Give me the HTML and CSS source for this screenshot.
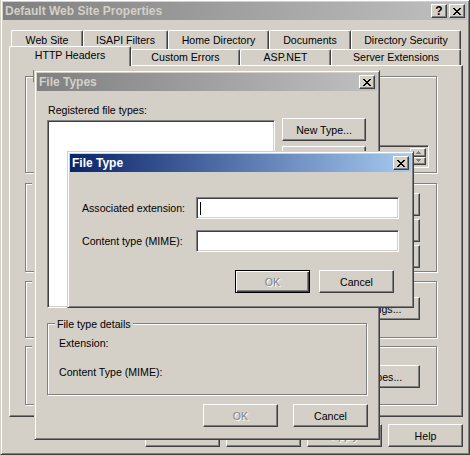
FILE: index.html
```html
<!DOCTYPE html>
<html>
<head>
<meta charset="utf-8">
<link rel="stylesheet" href="styles.css">
</head>
<body>
<div class="win outer">
  <div class="title inactive">
    <span class="t">Default Web Site Properties</span>
    <span class="capbtn help">?</span>
    <span class="capbtn close"><svg width="8" height="7" viewBox="0 0 8 7" shape-rendering="crispEdges"><path d="M0 0h2v1H0zM6 0h2v1H6zM1 1h2v1H1zM5 1h2v1H5zM2 2h4v1H2zM3 3h2v1H3zM2 4h4v1H2zM1 5h2v1H1zM5 5h2v1H5zM0 6h2v1H0zM6 6h2v1H6z"/></svg></span>
  </div>
  <div class="tabs">
    <div class="tabrow r1">
      <span class="tab w72">Web Site</span>
      <span class="tab w85">ISAPI Filters</span>
      <span class="tab w101">Home Directory</span>
      <span class="tab w82">Documents</span>
      <span class="tab w110">Directory Security</span>
    </div>
    <div class="tabrow r2">
      <span class="tab sel w122">HTTP Headers</span>
      <span class="tab w109">Custom Errors</span>
      <span class="tab w91">ASP.NET</span>
      <span class="tab w130">Server Extensions</span>
    </div>
  </div>
  <div class="panel">
    <div class="grp g1">
      <span class="glabel chk"><span class="cbox"></span></span>
      <div class="dtp"><span class="dtf"></span><span class="spin"><span class="sbtn"><svg width="5" height="3" viewBox="0 0 5 3"><path d="M2 0h1v1h1v1h1v1H0V2h1V1h1z" fill="#808080"/></svg></span><span class="sbtn"><svg width="5" height="3" viewBox="0 0 5 3"><path d="M0 0h5v1H4v1H3v1H2V2H1V1H0z" fill="#808080"/></svg></span></span></div>
    </div>
    <div class="grp g2">
      <span class="glabel"></span>
      <div class="gbtns">
        <span class="btn">Add...</span>
        <span class="btn">Edit...</span>
        <span class="btn">Remove</span>
      </div>
    </div>
    <div class="grp g3">
      <span class="glabel"></span>
      <span class="btn wide">Edit Ratings...</span>
    </div>
    <div class="grp g4">
      <span class="glabel"></span>
      <span class="btn wide">MIME Types...</span>
    </div>
  </div>
  <div class="btnrow">
    <span class="btn">OK</span>
    <span class="btn">Cancel</span>
    <span class="btn dis">Apply</span>
    <span class="btn">Help</span>
  </div>
</div>

<div class="win ftypes">
  <div class="title inactive">
    <span class="t">File Types</span>
    <span class="capbtn close"><svg width="8" height="7" viewBox="0 0 8 7" shape-rendering="crispEdges"><path d="M0 0h2v1H0zM6 0h2v1H6zM1 1h2v1H1zM5 1h2v1H5zM2 2h4v1H2zM3 3h2v1H3zM2 4h4v1H2zM1 5h2v1H1zM5 5h2v1H5zM0 6h2v1H0zM6 6h2v1H6z"/></svg></span>
  </div>
  <div class="ftbody">
    <span class="lbl reg">Registered file types:</span>
    <div class="ftrow">
      <div class="list"></div>
      <div class="ftbtns">
        <span class="btn nt">New Type...</span>
        <span class="btn nt"></span>
        <span class="btn nt"></span>
      </div>
    </div>
    <div class="grp details">
      <span class="glabel txt">File type details</span>
      <span class="lbl">Extension:</span>
      <span class="lbl">Content Type (MIME):</span>
    </div>
    <div class="ftok">
      <span class="btn dis">OK</span>
      <span class="btn">Cancel</span>
    </div>
  </div>
</div>

<div class="win ftype">
  <div class="title active">
    <span class="t">File Type</span>
    <span class="capbtn close"><svg width="8" height="7" viewBox="0 0 8 7" shape-rendering="crispEdges"><path d="M0 0h2v1H0zM6 0h2v1H6zM1 1h2v1H1zM5 1h2v1H5zM2 2h4v1H2zM3 3h2v1H3zM2 4h4v1H2zM1 5h2v1H1zM5 5h2v1H5zM0 6h2v1H0zM6 6h2v1H6z"/></svg></span>
  </div>
  <div class="fbody">
    <div class="frow">
      <span class="lbl">Associated extension:</span>
      <span class="edit"><span class="caret"></span></span>
    </div>
    <div class="frow second">
      <span class="lbl">Content type (MIME):</span>
      <span class="edit"></span>
    </div>
    <div class="fbtns">
      <span class="btn dis def">OK</span>
      <span class="btn">Cancel</span>
    </div>
  </div>
</div>
</body>
</html>
```

FILE: styles.css
```css
* { box-sizing: border-box; margin: 0; padding: 0; }
html, body { width: 470px; height: 456px; overflow: hidden; }
body {
  background: #d4d0c8;
  font-family: "Liberation Sans", Arial, sans-serif;
  font-size: 10.6px;
  color: #000;
  position: relative;
}

/* windows */
.win {
  position: absolute;
  background: #d4d0c8;
  border: 1px solid;
  border-color: #d4d0c8 #404040 #404040 #d4d0c8;
  box-shadow: inset 1px 1px #fff, inset -1px -1px #808080;
  padding: 2px;
  display: flex;
  flex-direction: column;
}
.outer { left: 0; top: -1px; width: 470px; height: 456px; }
.ftypes { left: 34px; top: 70px; width: 346px; height: 370px; }
.ftype { left: 67px; top: 151px; width: 347px; height: 157px; }

.title {
  height: 18px;
  flex: none;
  display: flex;
  align-items: center;
  padding: 0 2px 0 2px;
  font-weight: bold;
  font-size: 12px;
}
.title .t { flex: 1; white-space: nowrap; }
.title.inactive { background: linear-gradient(to right, #808080, #c0c0c0); color: #d4d0c8; }
.title.active { background: linear-gradient(to right, #0a246a, #a6caf0); color: #fff; }

.capbtn {
  width: 16px;
  height: 14px;
  background: #d4d0c8;
  border: 1px solid;
  border-color: #fff #404040 #404040 #fff;
  box-shadow: inset -1px -1px #808080;
  display: flex;
  align-items: center;
  justify-content: center;
  color: #000;
  font-size: 12px;
  font-weight: bold;
  line-height: 1;
}
.capbtn.help { margin-right: 2px; }
.capbtn svg { display: block; }

/* tabs */
.tabs { margin-top: 10px; display: flex; flex-direction: column; }
.tabrow { display: flex; }
.r1 { height: 19px; margin-left: 8px; }
.r2 { height: 16px; margin-left: 6px; align-items: flex-end; position: relative; z-index: 2; }
.tab {
  display: flex;
  align-items: center;
  justify-content: center;
  white-space: nowrap;
  border-top: 1px solid #fff;
  border-left: 1px solid #fff;
  border-right: 1px solid #404040;
  box-shadow: inset -1px 0 #808080;
  border-radius: 2px 2px 0 0;
  background: #d4d0c8;
  padding-bottom: 1px;
}
.r1 .tab { height: 19px; }
.r2 .tab { height: 16px; }
.r2 .tab.sel { height: 20px; margin-bottom: -1px; padding-bottom: 3px; position: relative; }
.w72 { width: 72px; } .w85 { width: 85px; } .w101 { width: 101px; } .w82 { width: 82px; }
.w110 { width: 110px; } .w122 { width: 122px; } .w109 { width: 109px; } .w91 { width: 91px; } .w130 { width: 130px; }

.panel {
  margin-left: 6px;
  width: 454px;
  height: 352px;
  border: 1px solid;
  border-color: #fff #404040 #404040 #fff;
  box-shadow: inset -1px -1px #808080;
  padding: 10px 0 0 15px;
  display: flex;
  flex-direction: column;
}

/* group boxes */
.grp {
  position: relative;
  border: 1px solid #808080;
  box-shadow: inset 1px 1px #fff, 1px 1px #fff;
}
.panel .grp { width: 412px; flex: none; }
.glabel {
  position: absolute;
  top: -7px;
  left: 6px;
  width: 70px;
  background: #d4d0c8;
  padding: 0 2px;
  white-space: nowrap;
  display: flex;
  align-items: center;
  height: 13px;
}
.glabel.txt { width: auto; }
.glabel.chk { left: 7px; top: -7px; padding: 0 3px 0 0; width: 140px; }
.cbox {
  width: 13px; height: 13px; margin-right: 4px; background: #fff;
  border: 1px solid; border-color: #808080 #fff #fff #808080;
  box-shadow: inset 1px 1px #404040, inset -1px -1px #d4d0c8;
}
.g1 { height: 97px; display: flex; flex-direction: column; align-items: flex-end; padding: 68px 7px 0 0; }
.g2 { height: 89px; margin-top: 10px; display: flex; flex-direction: column; align-items: flex-end; padding: 9px 16px 0 0; }
.g3 { height: 57px; margin-top: 9px; display: flex; flex-direction: column; align-items: flex-end; padding: 15px 16px 0 0; }
.g4 { height: 59px; margin-top: 8px; display: flex; flex-direction: column; align-items: flex-end; padding: 18px 16px 0 0; }
.gbtns { display: flex; flex-direction: column; gap: 3px; }

.dtp {
  width: 130px; height: 23px; background: #d4d0c8;
  border: 1px solid; border-color: #808080 #fff #fff #808080;
  box-shadow: inset 1px 1px #404040, inset -1px -1px #d4d0c8;
  display: flex; align-items: stretch; padding: 2px 2px 2px 4px;
}
.dtf { flex: 1; }
.spin { display: flex; flex-direction: column; width: 16px; }
.sbtn {
  flex: 1; background: #d4d0c8; display: flex; align-items: center; justify-content: center;
  border: 1px solid; border-color: #fff #404040 #404040 #fff; box-shadow: inset -1px -1px #808080;
}

/* buttons */
.btn {
  width: 75px;
  height: 23px;
  flex: none;
  background: #d4d0c8;
  border: 1px solid;
  border-color: #fff #404040 #404040 #fff;
  box-shadow: inset -1px -1px #808080;
  display: flex;
  align-items: center;
  justify-content: center;
  white-space: nowrap;
}
.btn.wide { width: 103px; }
.btn.dis { color: #808080; text-shadow: 1px 1px #fff; }
.btn.def {
  border: 1px solid #000;
  box-shadow: inset 1px 1px #fff, inset -1px -1px #404040, inset -2px -2px #808080;
}
.btnrow { display: flex; justify-content: flex-end; gap: 6px; margin-top: 7px; padding-right: 4px; }

/* File Types dialog */
.ftbody { display: flex; flex-direction: column; padding: 13px 0 0 10px; }
.lbl { display: block; height: 13px; line-height: 13px; white-space: nowrap; }
.reg { margin-left: 1px; }
.ftrow { display: flex; margin-top: 3px; gap: 7px; }
.list {
  width: 228px; height: 188px; background: #fff;
  border: 1px solid; border-color: #808080 #fff #fff #808080;
  box-shadow: inset 1px 1px #404040, inset -1px -1px #d4d0c8;
}
.ftbtns { display: flex; flex-direction: column; gap: 5px; margin-top: -2px; }
.btn.nt { width: 84px; }
.details {
  width: 320px; height: 72px; margin-top: 15px;
  padding: 13px 0 0 11px;
  display: flex; flex-direction: column; gap: 16px;
}
.details .glabel { left: 7px; }
.ftok { display: flex; gap: 15px; margin-top: 9px; margin-left: 156px; }

/* File Type dialog */
.fbody { display: flex; flex-direction: column; padding: 25px 0 0 12px; }
.frow { display: flex; align-items: center; }
.frow .lbl { width: 114px; }
.frow.second { margin-top: 11px; }
.edit {
  width: 203px; height: 22px; background: #fff; position: relative;
  border: 1px solid; border-color: #808080 #fff #fff #808080;
  box-shadow: inset 1px 1px #404040, inset -1px -1px #d4d0c8;
  display: flex; align-items: center; padding-left: 3px;
}
.caret { width: 1px; height: 13px; background: #000; }
.fbtns { display: flex; gap: 9px; margin-top: 18px; margin-left: 153px; }
```
